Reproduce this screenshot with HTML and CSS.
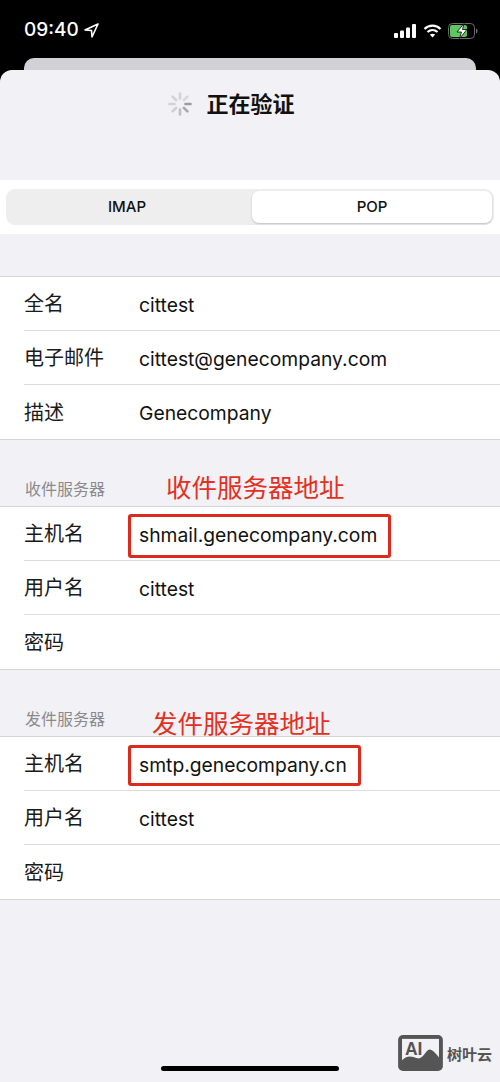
FILE: index.html
```html
<!DOCTYPE html>
<html lang="zh-CN">
	<head>
		<meta charset="UTF-8" />
		<title>正在验证</title>
		<link rel="stylesheet" href="styles.css">
	</head>
	<body>
		<div class="page">
			<!-- Status bar -->
			<div class="status-bar">
				<div class="status-left">
					<span class="clock">09:40</span>
					<svg class="loc-icon" width="15" height="15" viewBox="0 0 15 15"><path d="M14 1 L1 7 L7.5 7.5 L8 14 Z" fill="none" stroke="#fff" stroke-width="1.6" stroke-linejoin="round"/></svg>
				</div>
				<div class="status-right">
					<svg width="23" height="14" viewBox="0 0 23 14"><rect x="0" y="9" width="4" height="5" rx="1" fill="#fff"/><rect x="6" y="6.5" width="4" height="7.5" rx="1" fill="#fff"/><rect x="12" y="3.5" width="4" height="10.5" rx="1" fill="#fff"/><rect x="18" y="0" width="4" height="14" rx="1" fill="#fff"/></svg>
					<svg width="19" height="14" viewBox="0 0 19 14"><path d="M1.5 5 C6 0.6 13 0.6 17.5 5 M4.5 8 C7.5 5.3 11.5 5.3 14.5 8" fill="none" stroke="#fff" stroke-width="2.2"/><path d="M9.5 13.5 L6.8 10.6 C8.3 9.4 10.7 9.4 12.2 10.6 Z" fill="#fff"/></svg>
					<svg width="30" height="16" viewBox="0 0 30 16"><rect x="0.5" y="0.5" width="26" height="15" rx="4" fill="none" stroke="#6b6b6b"/><rect x="2" y="2" width="17" height="12" rx="2" fill="#5fc65f"/><path d="M28 5.5 C30 6 30 10 28 10.5 Z" fill="#6b6b6b"/><path d="M16 0.5 L9 9 L13.5 9 L11.5 15.5 L19 6.5 L14.5 6.5 Z" fill="#fff" stroke="#000" stroke-width="0.8"/></svg>
				</div>
			</div>
			<div class="back-card"></div>

			<!-- Sheet -->
			<div class="sheet">
				<div class="title-row">
					<svg class="spinner" width="24" height="24" viewBox="0 0 24 24" stroke="#8e8e93" stroke-width="2.6" stroke-linecap="round">
						<line x1="12" y1="1.5" x2="12" y2="6.5" opacity="0.3"/>
						<line x1="19.4" y1="4.6" x2="15.9" y2="8.1" opacity="0.25"/>
						<line x1="22.5" y1="12" x2="17.5" y2="12" opacity="0.85"/>
						<line x1="19.4" y1="19.4" x2="15.9" y2="15.9" opacity="0.75"/>
						<line x1="12" y1="22.5" x2="12" y2="17.5" opacity="0.5"/>
						<line x1="4.6" y1="19.4" x2="8.1" y2="15.9" opacity="0.35"/>
						<line x1="1.5" y1="12" x2="6.5" y2="12" opacity="0.3"/>
						<line x1="4.6" y1="4.6" x2="8.1" y2="8.1" opacity="0.3"/>
					</svg>
					<span class="title">正在验证</span>
				</div>

				<div class="segment-wrap">
					<div class="segment">
						<div class="seg-item">IMAP</div>
						<div class="seg-item active">POP</div>
					</div>
				</div>

				<div class="group first">
					<div class="row"><span class="label">全名</span><span class="value">cittest</span></div>
					<div class="row"><span class="label">电子邮件</span><span class="value">cittest@genecompany.com</span></div>
					<div class="row"><span class="label">描述</span><span class="value">Genecompany</span></div>
				</div>

				<div class="section-head">收件服务器</div>
				<div class="group">
					<div class="row"><span class="label">主机名</span><span class="value">shmail.genecompany.com</span></div>
					<div class="row"><span class="label">用户名</span><span class="value">cittest</span></div>
					<div class="row"><span class="label">密码</span></div>
				</div>

				<div class="section-head second">发件服务器</div>
				<div class="group">
					<div class="row"><span class="label">主机名</span><span class="value">smtp.genecompany.cn</span></div>
					<div class="row"><span class="label">用户名</span><span class="value">cittest</span></div>
					<div class="row"><span class="label">密码</span></div>
				</div>
			</div>

			<!-- Red annotations over the screenshot -->
			<div class="note note-in">收件服务器地址</div>
			<div class="red-box box-in"></div>
			<div class="note note-out">发件服务器地址</div>
			<div class="red-box box-out"></div>

			<div class="home-bar"></div>

			<!-- Watermark -->
			<div class="watermark">
				<svg width="45" height="36" viewBox="0 0 46 37">
					<rect x="0" y="0" width="46" height="37" rx="5" fill="#555"/>
					<rect x="4" y="4" width="38" height="25" fill="#f1f1f6"/>
					<text x="7" y="21" font-family="Liberation Sans, sans-serif" font-size="18" font-weight="700" fill="#555">AI</text>
					<path d="M4 26 C10 20 14 22 20 24 C26 25 28 16 32 15 C36 15 39 20 42 23 L42 32 L4 32 Z" fill="#555"/>
				</svg>
				<span class="wm-text">树叶云</span>
			</div>
		</div>
	</body>
</html>
```

FILE: styles.css
```css
/* Base styles */
body {
	margin: 0px;
	padding: 0px;
	font-family: Inter, "Noto Sans CJK SC", sans-serif;
	color: #1a1a1a;
}
.page {
	position: relative;
	width: 500px;
	height: 1082px;
	overflow: hidden;
	background: #000;
	display: flex;
	flex-direction: column;
}
/* Status bar */
.status-bar {
	height: 58px;
	flex-shrink: 0;
	display: flex;
	justify-content: space-between;
	align-items: flex-start;
	padding: 19px 22px 0 24px;
	box-sizing: border-box;
	color: #fff;
}
.status-left {
	display: flex;
	align-items: center;
	gap: 5px;
}
.clock {
	font-size: 19px;
	line-height: 22px;
	font-weight: 500;
}
.status-right {
	display: flex;
	align-items: center;
	gap: 6px;
	padding-top: 4px;
}
.back-card {
	height: 24px;
	flex-shrink: 0;
	margin: 0 24px -12px;
	background: #d1d1d6;
	border-radius: 10px 10px 0 0;
}
/* Sheet */
.sheet {
	position: relative;
	flex: 1;
	background: #f1f1f6;
	border-radius: 12px 12px 0 0;
}
.title-row {
	height: 110px;
	display: flex;
	justify-content: center;
	align-items: flex-start;
	gap: 14px;
	padding: 22px 37px 0 0;
	box-sizing: border-box;
}
.title {
	font-size: 22px;
	line-height: 24px;
	font-weight: 600;
	color: #111;
}
/* Segmented control */
.segment-wrap {
	background: #fff;
	height: 54px;
	padding: 9px 6px;
	box-sizing: border-box;
}
.segment {
	height: 36px;
	display: flex;
	gap: 6px;
	padding: 2px;
	box-sizing: border-box;
	background: #eeeeee;
	border-radius: 9px;
}
.seg-item {
	width: 238px;
	text-align: center;
	font-size: 15px;
	line-height: 32px;
	font-weight: 500;
	color: #111;
}
.seg-item.active {
	width: 240px;
	background: #fff;
	border-radius: 7px;
	box-shadow: 0 1px 2px rgba(0, 0, 0, 0.2);
}
/* Form groups */
.group {
	background: #fff;
	border-top: 1px solid #d4d4d8;
	border-bottom: 1px solid #d4d4d8;
}
.group.first {
	margin-top: 42px;
}
.row {
	height: 54px;
	margin-left: 24px;
	display: flex;
	align-items: center;
	border-bottom: 1px solid #dcdcdf;
	box-sizing: border-box;
	font-size: 20px;
}
.row:last-child {
	border-bottom: none;
}
.label {
	width: 115px;
	flex-shrink: 0;
	margin-bottom: 2px;
}
.value {
	font-size: 19.3px;
	margin-top: 2px;
	color: #111;
}
.section-head {
	height: 66px;
	box-sizing: border-box;
	padding: 39px 0 0 25px;
	font-size: 16px;
	line-height: 20px;
	color: #8a8a8e;
}
/* Annotations */
.note {
	position: absolute;
	font-size: 25.5px;
	line-height: 30px;
	color: #e3301f;
}
.note-in {
	left: 166px;
	top: 473px;
}
.note-out {
	left: 152px;
	top: 709px;
}
.red-box {
	position: absolute;
	box-sizing: border-box;
	border: 3px solid #dc2a1c;
	border-radius: 3px;
}
.box-in {
	left: 128px;
	top: 514px;
	width: 263px;
	height: 44px;
}
.box-out {
	left: 128px;
	top: 745px;
	width: 233px;
	height: 41px;
}
.home-bar {
	position: absolute;
	left: 161px;
	top: 1066px;
	width: 178px;
	height: 5px;
	border-radius: 3px;
	background: #000;
}
/* Watermark */
.watermark {
	position: absolute;
	left: 398px;
	top: 1035px;
	display: flex;
	align-items: center;
	gap: 4px;
}
.wm-text {
	font-size: 15px;
	font-weight: 700;
	color: #555;
}
```
